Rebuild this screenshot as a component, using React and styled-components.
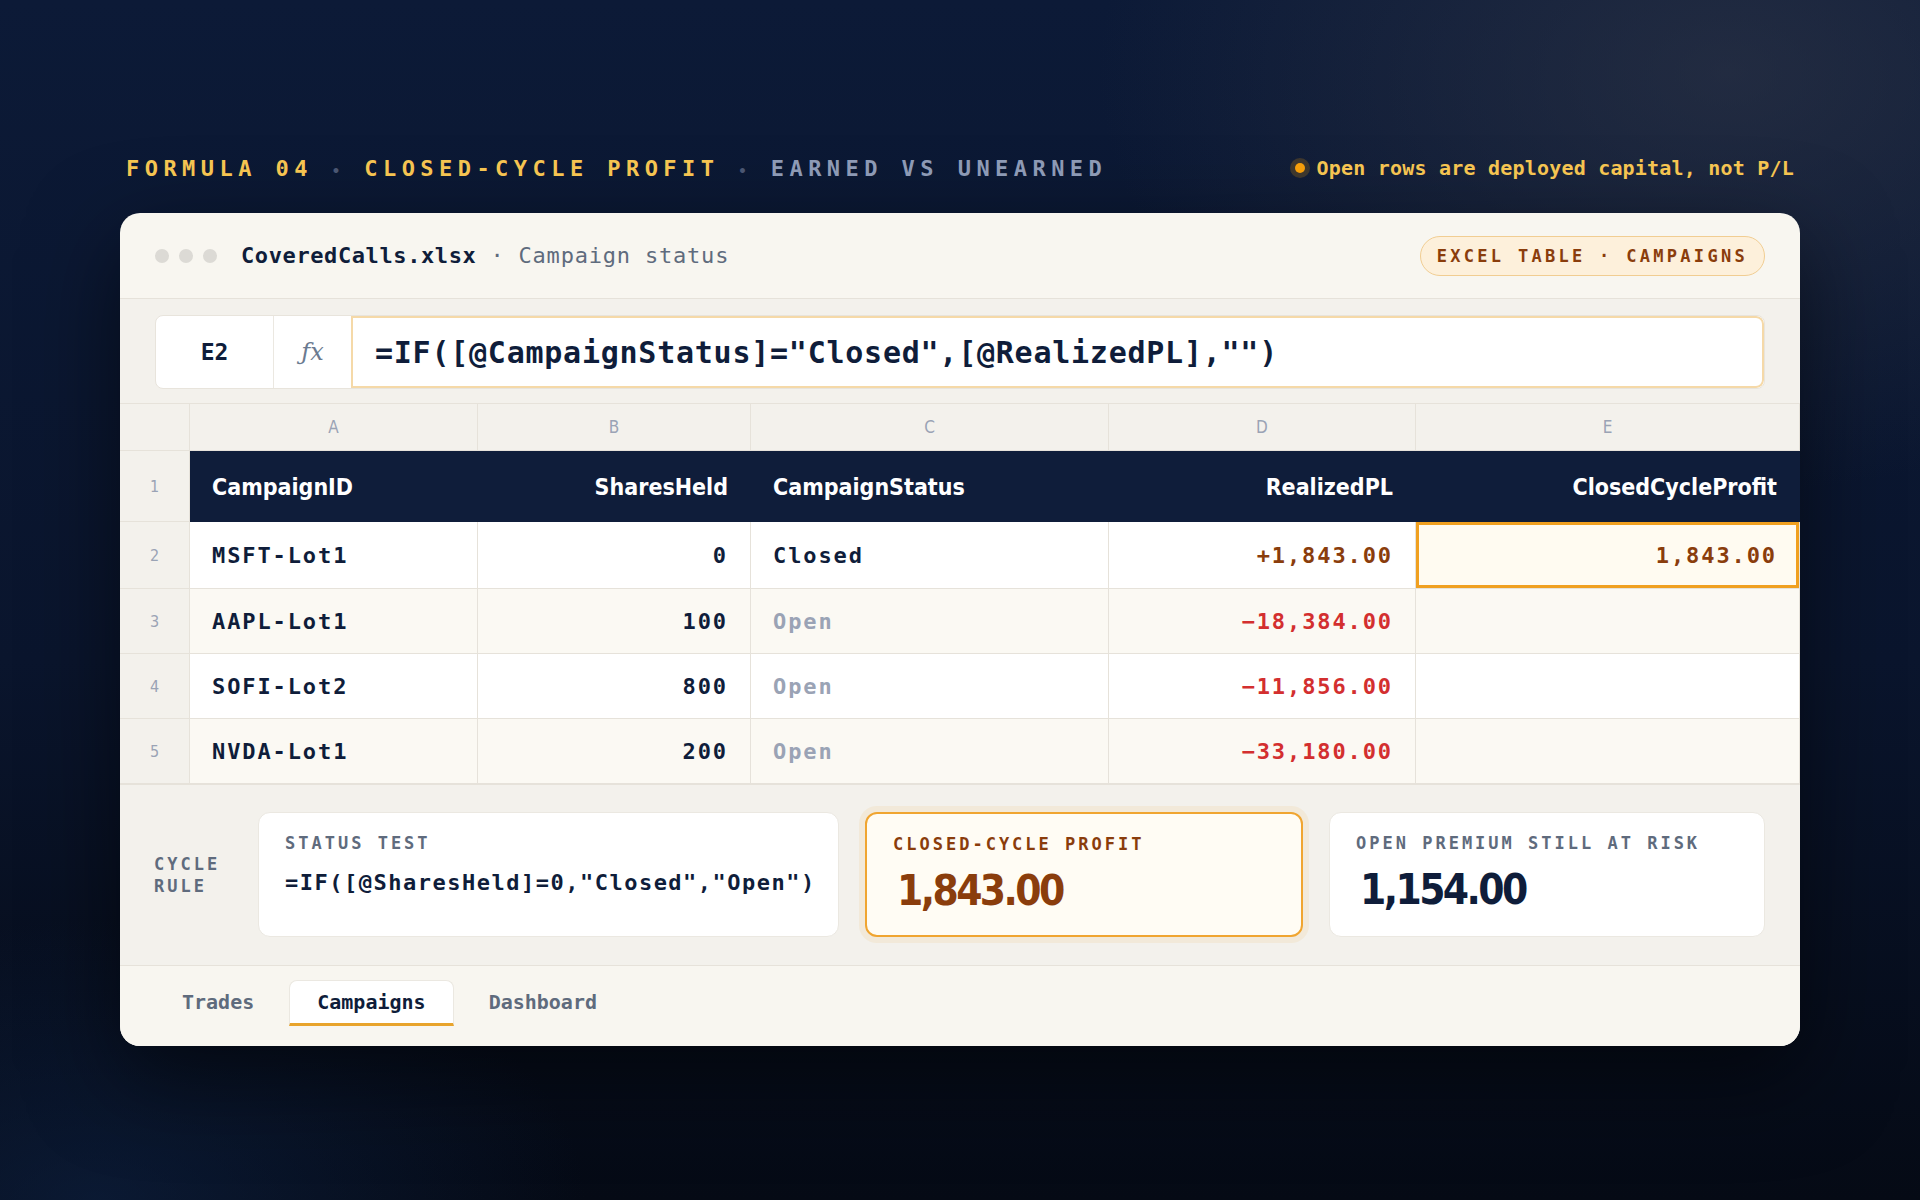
import React from "react";
import styled, { createGlobalStyle } from "styled-components";

const mono = `"DejaVu Sans Mono", "Liberation Mono", monospace`;
const cond = `"DejaVu Sans Condensed", "DejaVu Sans", sans-serif`;
const navy = "#0f1d3a";
const brown = "#8a3d0c";
const line = "#e6e2da";

const GlobalStyle = createGlobalStyle`
  html, body { margin: 0; padding: 0; }
  body {
    min-height: 1200px;
    font-family: ${mono};
    background:
      radial-gradient(ellipse 900px 600px at 90% 6%, rgba(52, 58, 74, 0.55) 0%, rgba(52, 58, 74, 0) 70%),
      radial-gradient(ellipse 700px 400px at 5% 100%, rgba(16, 40, 80, 0.5) 0%, rgba(16, 40, 80, 0) 70%),
      linear-gradient(180deg, #0c1a37 0%, #0a152d 55%, #050a15 100%);
  }
`;

const Page = styled.div`
  width: 1680px;
  margin: 0 auto;
  padding-top: 150px;
`;

const TopLine = styled.div`
  display: flex;
  justify-content: space-between;
  align-items: center;
  height: 36px;
  margin: 0 6px 27px;
`;

const Kicker = styled.div`
  font-family: ${mono};
  font-weight: 700;
  font-size: 22px;
  letter-spacing: 5.45px;
  color: #f5c451;
  white-space: nowrap;
`;

const Sep = styled.span`
  color: #4a5672;
  font-size: 14px;
`;

const Muted = styled.span`
  color: #8d9ab5;
`;

const Note = styled.div`
  display: flex;
  align-items: center;
  gap: 12px;
  font-family: ${mono};
  font-weight: 700;
  font-size: 20px;
  letter-spacing: 0.2px;
  color: #f5c451;
`;

const NoteDot = styled.span`
  width: 10px;
  height: 10px;
  border-radius: 50%;
  background: #f59e0b;
  box-shadow: 0 0 0 5px rgba(245, 158, 11, 0.2);
`;

const Card = styled.div`
  background: #f8f6f0;
  border-radius: 20px;
  overflow: hidden;
  box-shadow: 0 30px 90px rgba(0, 0, 0, 0.55);
`;

const TitleBar = styled.div`
  height: 86px;
  display: flex;
  align-items: center;
  justify-content: space-between;
  padding: 0 35px;
  border-bottom: 1px solid ${line};
  box-sizing: border-box;
`;

const TitleLeft = styled.div`
  display: flex;
  align-items: center;
`;

const Dots = styled.div`
  display: flex;
  gap: 10px;
  margin-right: 24px;
`;

const Dot = styled.span`
  width: 14px;
  height: 14px;
  border-radius: 50%;
  background: #dcdad5;
`;

const FileName = styled.span`
  font-size: 22px;
  font-weight: 700;
  color: ${navy};
  letter-spacing: 0.6px;
`;

const FileSub = styled.span`
  font-size: 22px;
  color: #5f6b7d;
  letter-spacing: 0.8px;
`;

const Pill = styled.div`
  height: 40px;
  padding: 0 16px;
  display: flex;
  align-items: center;
  border-radius: 20px;
  background: #fdf0db;
  border: 1px solid #f1cd92;
  color: ${brown};
  font-size: 17px;
  font-weight: 700;
  letter-spacing: 3.3px;
  box-sizing: border-box;
`;

const FormulaArea = styled.div`
  height: 105px;
  padding: 16px 35px;
  box-sizing: border-box;
  background: #f3f1ec;
  border-bottom: 1px solid ${line};
`;

const FormulaBox = styled.div`
  display: flex;
  height: 72px;
  border: 1px solid #e8e4dc;
  border-radius: 8px;
  background: #fff;
  overflow: hidden;
`;

const NameBox = styled.div`
  width: 117px;
  display: flex;
  align-items: center;
  justify-content: center;
  border-right: 1px solid #ebe8e1;
  font-size: 23px;
  font-weight: 700;
  color: ${navy};
`;

const FxBox = styled.div`
  width: 77px;
  display: flex;
  align-items: center;
  justify-content: center;
  font-family: "DejaVu Serif", serif;
  font-style: italic;
  font-size: 24px;
  color: #6b7a90;
`;

const FormulaInput = styled.div`
  flex: 1;
  display: flex;
  align-items: center;
  padding: 0 22px;
  border: 2px solid #f5d9a8;
  border-radius: 0 8px 8px 0;
  font-size: 30px;
  font-weight: 700;
  letter-spacing: 0.75px;
  color: ${navy};
`;

const Row = styled.div`
  display: grid;
  grid-template-columns: 70px 288px 273px 358px 307px 1fr;
  height: ${(p) => p.$h}px;
  background: ${(p) => p.$bg || "transparent"};
`;

const ColHead = styled.div`
  display: flex;
  align-items: center;
  justify-content: center;
  background: #f3f1ec;
  border-right: 1px solid ${line};
  border-bottom: 1px solid ${line};
  font-family: ${cond};
  font-size: 17px;
  color: #9aa3b5;
`;

const RowNum = styled.div`
  display: flex;
  align-items: center;
  justify-content: center;
  background: #f3f1ec;
  border-right: 1px solid ${line};
  border-bottom: 1px solid ${line};
  font-family: ${cond};
  font-size: 16px;
  color: #9aa3b5;
`;

const HeadCell = styled.div`
  display: flex;
  align-items: center;
  justify-content: ${(p) => (p.$right ? "flex-end" : "flex-start")};
  padding: 0 23px 0 22px;
  background: ${navy};
  color: #fff;
  font-family: ${cond};
  font-weight: 700;
  font-size: 23px;
`;

const toneColor = {
  text: navy,
  muted: "#9aa3b5",
  gain: brown,
  loss: "#d32f2f",
};

const Cell = styled.div`
  display: flex;
  align-items: center;
  justify-content: ${(p) => (p.$right ? "flex-end" : "flex-start")};
  padding: 0 22px 0 22px;
  border-right: 1px solid ${line};
  border-bottom: 1px solid ${line};
  font-size: 22px;
  font-weight: 700;
  letter-spacing: 1.9px;
  color: ${(p) => toneColor[p.$tone || "text"]};
  background: ${(p) => (p.$selected ? "#fffbf1" : "transparent")};
  box-shadow: ${(p) => (p.$selected ? "inset 0 0 0 3px #f0a020" : "none")};
`;

const Summary = styled.div`
  display: grid;
  grid-template-columns: 78px 581px 438px 1fr;
  gap: 26px;
  align-items: center;
  padding: 27px 35px 28px 34px;
  background: #f3f1ec;
  border-top: 1px solid ${line};
`;

const RuleLabel = styled.div`
  font-size: 17px;
  font-weight: 700;
  letter-spacing: 3px;
  line-height: 22px;
  color: #5f6b7d;
`;

const StatCard = styled.div`
  height: 125px;
  box-sizing: border-box;
  padding: 20px 24px 0 26px;
  border-radius: 12px;
  background: ${(p) => (p.$hot ? "#fffcf4" : "#fff")};
  border: ${(p) => (p.$hot ? "2px solid #f0a530" : "1px solid #ebe8e1")};
  box-shadow: ${(p) => (p.$hot ? "0 0 0 6px rgba(240, 165, 48, 0.1)" : "none")};
`;

const StatLabel = styled.div`
  font-size: 17px;
  font-weight: 700;
  letter-spacing: 3px;
  color: ${(p) => (p.$hot ? brown : "#5f6b7d")};
`;

const StatFormula = styled.div`
  margin-top: 17px;
  font-size: 22px;
  font-weight: 700;
  letter-spacing: 1.5px;
  color: ${navy};
  white-space: nowrap;
`;

const StatValue = styled.div`
  margin-top: 12px;
  padding-left: 4px;
  font-family: ${cond};
  font-size: 42px;
  font-weight: 700;
  letter-spacing: -2.6px;
  color: ${(p) => (p.$hot ? brown : navy)};
`;

const TabBar = styled.div`
  display: flex;
  gap: 7px;
  padding: 14px 34px 0;
  height: 81px;
  box-sizing: border-box;
  border-top: 1px solid ${line};
  background: #f8f6f0;
`;

const Tab = styled.div`
  height: 46px;
  box-sizing: border-box;
  padding: 0 27px;
  display: flex;
  align-items: center;
  font-size: 20px;
  font-weight: 700;
  color: ${(p) => (p.$active ? navy : "#5f6b7d")};
  background: ${(p) => (p.$active ? "#fff" : "transparent")};
  border: 1px solid ${(p) => (p.$active ? "#ebe8e1" : "transparent")};
  border-bottom: 3px solid ${(p) => (p.$active ? "#e8a42c" : "transparent")};
  border-radius: 8px 8px 0 0;
`;

const rows = [
  { n: 2, id: "MSFT-Lot1", shares: "0", status: "Closed", pl: "+1,843.00", profit: "1,843.00", h: 67, bg: "#fff" },
  { n: 3, id: "AAPL-Lot1", shares: "100", status: "Open", pl: "−18,384.00", profit: "", h: 65, bg: "#fbf9f3" },
  { n: 4, id: "SOFI-Lot2", shares: "800", status: "Open", pl: "−11,856.00", profit: "", h: 65, bg: "#fff" },
  { n: 5, id: "NVDA-Lot1", shares: "200", status: "Open", pl: "−33,180.00", profit: "", h: 65, bg: "#fbf9f3" },
];

export default function App() {
  return (
    <>
      <GlobalStyle />
      <Page>
        <TopLine>
          <Kicker>
            FORMULA 04 <Sep>•</Sep> CLOSED-CYCLE PROFIT <Sep>•</Sep> <Muted>EARNED VS UNEARNED</Muted>
          </Kicker>
          <Note>
            <NoteDot />
            Open rows are deployed capital, not P/L
          </Note>
        </TopLine>

        <Card>
          <TitleBar>
            <TitleLeft>
              <Dots>
                <Dot />
                <Dot />
                <Dot />
              </Dots>
              <FileName>CoveredCalls.xlsx</FileName>
              <FileSub>&nbsp;· Campaign status</FileSub>
            </TitleLeft>
            <Pill>EXCEL TABLE · CAMPAIGNS</Pill>
          </TitleBar>

          <FormulaArea>
            <FormulaBox>
              <NameBox>E2</NameBox>
              <FxBox>ƒx</FxBox>
              <FormulaInput>=IF([@CampaignStatus]="Closed",[@RealizedPL],"")</FormulaInput>
            </FormulaBox>
          </FormulaArea>

          <Row $h={47}>
            <ColHead />
            <ColHead>A</ColHead>
            <ColHead>B</ColHead>
            <ColHead>C</ColHead>
            <ColHead>D</ColHead>
            <ColHead>E</ColHead>
          </Row>
          <Row $h={71}>
            <RowNum>1</RowNum>
            <HeadCell>CampaignID</HeadCell>
            <HeadCell $right>SharesHeld</HeadCell>
            <HeadCell>CampaignStatus</HeadCell>
            <HeadCell $right>RealizedPL</HeadCell>
            <HeadCell $right>ClosedCycleProfit</HeadCell>
          </Row>
          {rows.map((r) => (
            <Row key={r.n} $h={r.h} $bg={r.bg}>
              <RowNum>{r.n}</RowNum>
              <Cell>{r.id}</Cell>
              <Cell $right>{r.shares}</Cell>
              <Cell $tone={r.status === "Open" ? "muted" : "text"}>{r.status}</Cell>
              <Cell $right $tone={r.pl.startsWith("+") ? "gain" : "loss"}>{r.pl}</Cell>
              <Cell $right $tone="gain" $selected={r.n === 2}>{r.profit}</Cell>
            </Row>
          ))}

          <Summary>
            <RuleLabel>
              CYCLE
              <br />
              RULE
            </RuleLabel>
            <StatCard>
              <StatLabel>STATUS TEST</StatLabel>
              <StatFormula>=IF([@SharesHeld]=0,"Closed","Open")</StatFormula>
            </StatCard>
            <StatCard $hot>
              <StatLabel $hot>CLOSED-CYCLE PROFIT</StatLabel>
              <StatValue $hot>1,843.00</StatValue>
            </StatCard>
            <StatCard>
              <StatLabel>OPEN PREMIUM STILL AT RISK</StatLabel>
              <StatValue>1,154.00</StatValue>
            </StatCard>
          </Summary>

          <TabBar>
            <Tab>Trades</Tab>
            <Tab $active>Campaigns</Tab>
            <Tab>Dashboard</Tab>
          </TabBar>
        </Card>
      </Page>
    </>
  );
}
